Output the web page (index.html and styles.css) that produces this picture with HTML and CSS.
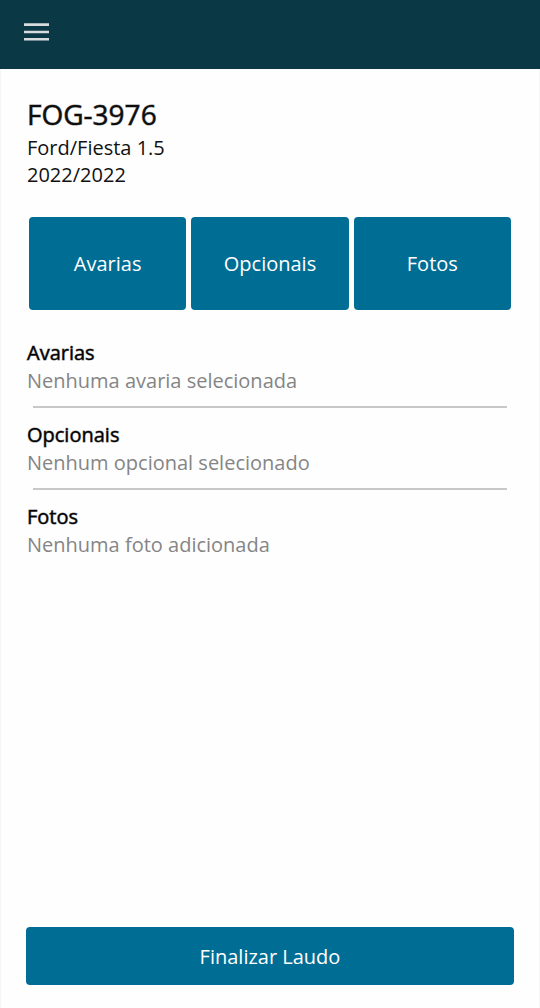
FILE: index.html
```html
<!DOCTYPE html>
<html lang="pt-BR">
<head>
<meta charset="utf-8">
<meta name="viewport" content="width=device-width, initial-scale=1">
<title>Laudo FOG-3976</title>
<link rel="stylesheet" href="styles.css">
</head>
<body>
<header class="topbar">
  <button class="menu-button" type="button" aria-label="Menu">
    <svg class="menu-icon" viewBox="0 0 25 18" aria-hidden="true"><path d="M0 1.6h25M0 9h25M0 16.2h25"/></svg>
  </button>
</header>
<main class="content">
  <section class="vehicle">
    <h1 class="plate">FOG-3976</h1>
    <p class="detail">Ford/Fiesta 1.5</p>
    <p class="detail">2022/2022</p>
  </section>
  <nav class="actions">
    <button class="button tile" type="button">Avarias</button>
    <button class="button tile" type="button">Opcionais</button>
    <button class="button tile" type="button">Fotos</button>
  </nav>
  <div class="summary">
    <section class="group">
      <h2 class="group-title">Avarias</h2>
      <p class="group-text">Nenhuma avaria selecionada</p>
    </section>
    <hr class="divider">
    <section class="group">
      <h2 class="group-title">Opcionais</h2>
      <p class="group-text">Nenhum opcional selecionado</p>
    </section>
    <hr class="divider">
    <section class="group">
      <h2 class="group-title">Fotos</h2>
      <p class="group-text">Nenhuma foto adicionada</p>
    </section>
  </div>
  <button class="button finish" type="button">Finalizar Laudo</button>
</main>
</body>
</html>
```
FILE: styles.css
```css
* {
  box-sizing: border-box;
}

body {
  display: flex;
  flex-direction: column;
  min-height: 100vh;
  margin: 0;
  background: #fefefe;
  color: #111;
  font-family: "Open Sans", "Noto Sans", sans-serif;
  font-size: 20px;
  line-height: 27px;
}

h1, h2, p {
  margin: 0;
}

.topbar {
  display: flex;
  padding: 16px 24px 21px;
  background: #0a3844;
}

.menu-button {
  display: flex;
  align-items: center;
  height: 32px;
  padding: 0;
  border: 0;
  background: none;
}

.menu-icon {
  width: 25px;
  height: 18px;
  fill: none;
  stroke: #d9dcdd;
  stroke-width: 2.6;
}

.content {
  display: flex;
  flex: 1;
  flex-direction: column;
  padding: 26px 25px 23px;
  border: solid #f5f6f7;
  border-width: 0 1px;
}

.vehicle,
.group {
  padding-left: 1px;
}

.plate,
.group-title {
  font-weight: 400;
  -webkit-text-stroke: 1px rgb(0 0 0 / 50%);
}

.plate {
  font-size: 28px;
  line-height: 39px;
}

.actions {
  display: flex;
  gap: 5px;
  margin: 29px 3px;
}

.button {
  border: 0;
  border-radius: 4px;
  background: #006e94;
  color: #fff;
  font: inherit;
}

.tile {
  flex: 1;
  height: 93px;
}

.group-title {
  color: #000;
  font-size: 20px;
  line-height: 28px;
}

.group-text {
  color: #858585;
}

.divider {
  height: 2px;
  margin: 12px 7px 13px;
  border: 0;
  background: #c8c8c8;
}

.finish {
  height: 58px;
  margin-top: auto;
}
```
